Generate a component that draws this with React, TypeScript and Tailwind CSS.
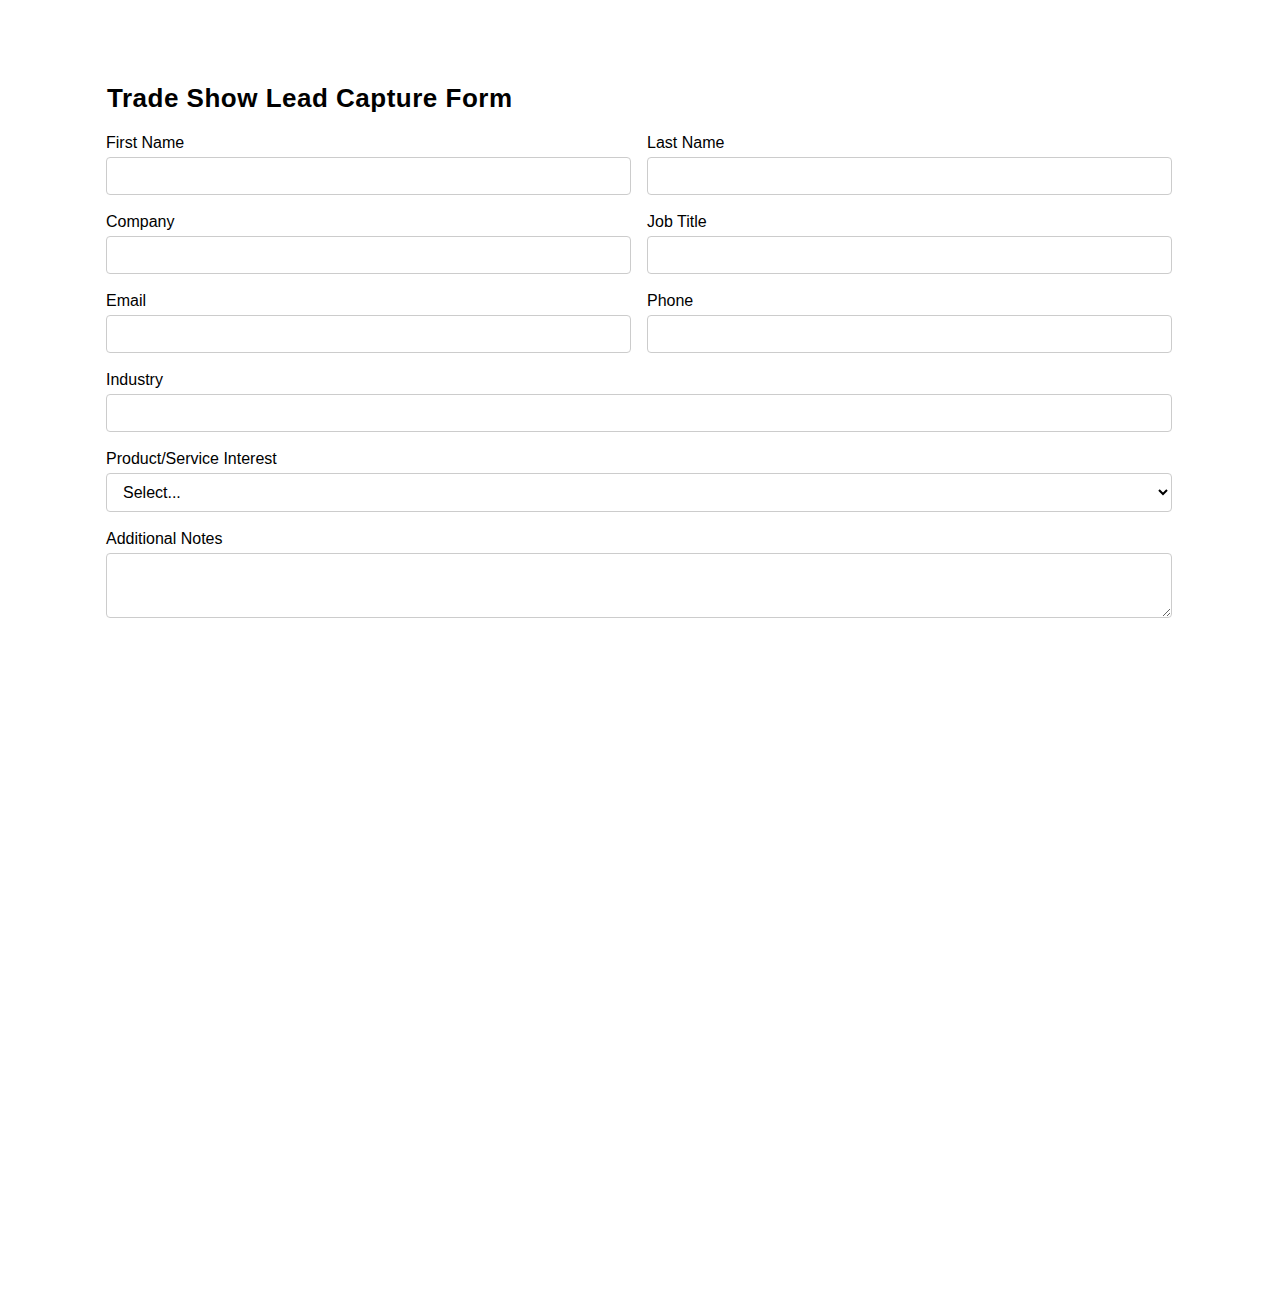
export default function App() {
  const field =
    "block w-full h-[38px] rounded-[4px] border border-[#cccccc] bg-white px-4 text-[16px] outline-none";
  const label = "block text-[16px] leading-[18px] mb-[5px] text-black";
  return (
    <div className="min-h-[1300px] bg-white font-['Liberation_Sans',Arial,sans-serif] text-black">
      <div className="mx-auto w-[1066px] pt-[82px]">
        <h2 className="text-[26px] leading-[32px] font-bold tracking-[0.5px] pl-[1px] mb-[20px]">
          Trade Show Lead Capture Form
        </h2>
        <form className="flex flex-col gap-[18px]">
          <div className="grid grid-cols-2 gap-x-4 gap-y-[18px]">
            <div>
              <label className={label}>First Name</label>
              <input className={field} type="text" />
            </div>
            <div>
              <label className={label}>Last Name</label>
              <input className={field} type="text" />
            </div>
            <div>
              <label className={label}>Company</label>
              <input className={field} type="text" />
            </div>
            <div>
              <label className={label}>Job Title</label>
              <input className={field} type="text" />
            </div>
            <div>
              <label className={label}>Email</label>
              <input className={field} type="email" />
            </div>
            <div>
              <label className={label}>Phone</label>
              <input className={field} type="tel" />
            </div>
          </div>
          <div>
            <label className={label}>Industry</label>
            <input className={field} type="text" />
          </div>
          <div>
            <label className={label}>Product/Service Interest</label>
            <select
              className="block w-full h-[39px] rounded-[4px] border border-[#cccccc] bg-white pl-[12px] pr-1 text-[16px] outline-none"
              defaultValue=""
            >
              <option value="">Select...</option>
              <option value="hardware">Hardware</option>
              <option value="software">Software</option>
              <option value="services">Services</option>
            </select>
          </div>
          <div>
            <label className={label}>Additional Notes</label>
            <textarea className="block w-full h-[65px] rounded-[4px] border border-[#cccccc] bg-white px-4 py-2 text-[16px] outline-none" />
          </div>
        </form>
      </div>
    </div>
  );
}
